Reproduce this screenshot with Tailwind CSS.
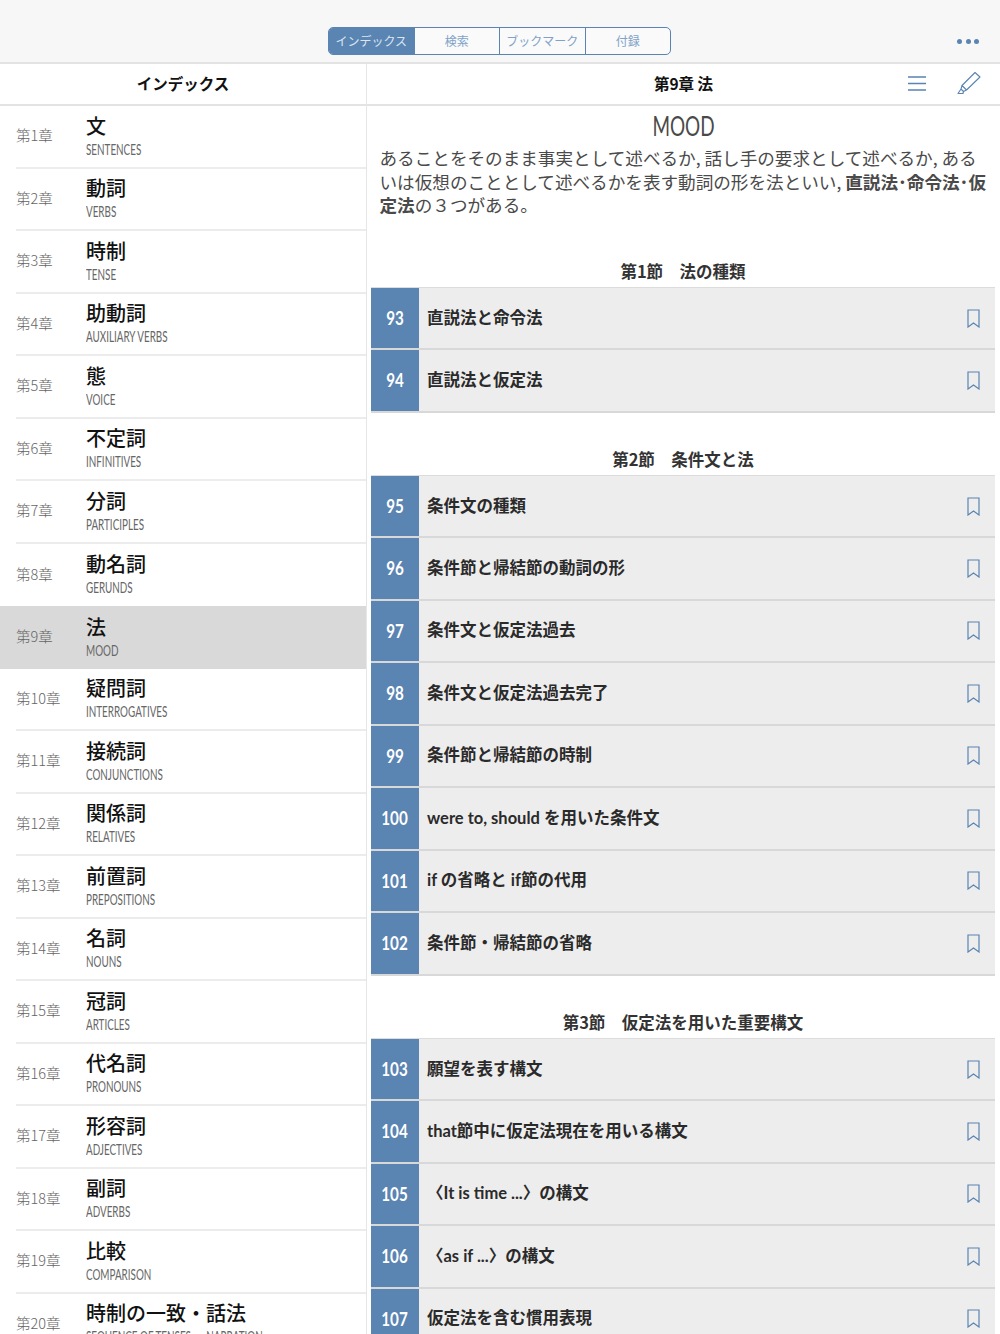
<!DOCTYPE html>
<html lang="ja">
<head>
<meta charset="utf-8">
<script src="https://cdn.jsdelivr.net/npm/@tailwindcss/browser@4"></script>
</head>
<body class="bg-white">
<div class="w-[1000px] h-[1334px] overflow-hidden flex flex-col font-['Noto_Sans','Noto_Sans_CJK_JP',sans-serif]">
  <!-- Top bar -->
  <header class="h-[64px] shrink-0 bg-[#f7f7f7] border-b-2 border-[#e3e3e3] relative flex items-start justify-center pt-[27px]">
    <div class="flex h-[28px] w-[343px] mr-[1px] rounded-[5px] border border-[#5a84b2] overflow-hidden text-[12px] text-[#7fa2c8] font-['Noto_Sans_CJK_JP',sans-serif] bg-white/40">
      <div class="flex-1 flex items-center justify-center bg-[#5a84b2] text-[#dbe6f1]">インデックス</div>
      <div class="flex-1 flex items-center justify-center border-l border-[#5a84b2]">検索</div>
      <div class="flex-1 flex items-center justify-center border-l border-[#5a84b2]">ブックマーク</div>
      <div class="flex-1 flex items-center justify-center border-l border-[#5a84b2]">付録</div>
    </div>
    <div class="absolute left-[957px] top-[39px] flex gap-[3.5px]">
      <span class="w-[5px] h-[5px] rounded-full bg-[#5a84b2]"></span>
      <span class="w-[5px] h-[5px] rounded-full bg-[#5a84b2]"></span>
      <span class="w-[5px] h-[5px] rounded-full bg-[#5a84b2]"></span>
    </div>
  </header>

  <div class="flex flex-1 min-h-0">
    <!-- Sidebar -->
    <aside class="w-[367px] shrink-0 border-r border-[#e6e6e6] flex flex-col">
      <div class="h-[42px] shrink-0 border-b-2 border-[#e3e3e3] flex items-center justify-center font-['Noto_Sans_CJK_JP',sans-serif] font-bold text-[15.5px] text-[#111]">インデックス</div>
      <ul class="font-['Noto_Sans_CJK_JP',sans-serif]">
        <li class="h-[62.5px] pl-[16px]"><div class="h-full flex items-center border-b-2 border-[#ececec]"><span class="w-[70px] -mt-[2px] text-[14.5px] font-light text-[#666]">第1章</span><div class="flex flex-col pt-[2px]"><span class="text-[20px] leading-[25px] font-medium text-[#111]">文</span><span class="origin-left scale-x-[0.68] whitespace-nowrap text-[14.5px] leading-[24px] text-[#666] font-['Lato',sans-serif]">SENTENCES</span></div></div></li>
        <li class="h-[62.5px] pl-[16px]"><div class="h-full flex items-center border-b-2 border-[#ececec]"><span class="w-[70px] -mt-[2px] text-[14.5px] font-light text-[#666]">第2章</span><div class="flex flex-col pt-[2px]"><span class="text-[20px] leading-[25px] font-medium text-[#111]">動詞</span><span class="origin-left scale-x-[0.68] whitespace-nowrap text-[14.5px] leading-[24px] text-[#666] font-['Lato',sans-serif]">VERBS</span></div></div></li>
        <li class="h-[62.5px] pl-[16px]"><div class="h-full flex items-center border-b-2 border-[#ececec]"><span class="w-[70px] -mt-[2px] text-[14.5px] font-light text-[#666]">第3章</span><div class="flex flex-col pt-[2px]"><span class="text-[20px] leading-[25px] font-medium text-[#111]">時制</span><span class="origin-left scale-x-[0.68] whitespace-nowrap text-[14.5px] leading-[24px] text-[#666] font-['Lato',sans-serif]">TENSE</span></div></div></li>
        <li class="h-[62.5px] pl-[16px]"><div class="h-full flex items-center border-b-2 border-[#ececec]"><span class="w-[70px] -mt-[2px] text-[14.5px] font-light text-[#666]">第4章</span><div class="flex flex-col pt-[2px]"><span class="text-[20px] leading-[25px] font-medium text-[#111]">助動詞</span><span class="origin-left scale-x-[0.68] whitespace-nowrap text-[14.5px] leading-[24px] text-[#666] font-['Lato',sans-serif]">AUXILIARY VERBS</span></div></div></li>
        <li class="h-[62.5px] pl-[16px]"><div class="h-full flex items-center border-b-2 border-[#ececec]"><span class="w-[70px] -mt-[2px] text-[14.5px] font-light text-[#666]">第5章</span><div class="flex flex-col pt-[2px]"><span class="text-[20px] leading-[25px] font-medium text-[#111]">態</span><span class="origin-left scale-x-[0.68] whitespace-nowrap text-[14.5px] leading-[24px] text-[#666] font-['Lato',sans-serif]">VOICE</span></div></div></li>
        <li class="h-[62.5px] pl-[16px]"><div class="h-full flex items-center border-b-2 border-[#ececec]"><span class="w-[70px] -mt-[2px] text-[14.5px] font-light text-[#666]">第6章</span><div class="flex flex-col pt-[2px]"><span class="text-[20px] leading-[25px] font-medium text-[#111]">不定詞</span><span class="origin-left scale-x-[0.68] whitespace-nowrap text-[14.5px] leading-[24px] text-[#666] font-['Lato',sans-serif]">INFINITIVES</span></div></div></li>
        <li class="h-[62.5px] pl-[16px]"><div class="h-full flex items-center border-b-2 border-[#ececec]"><span class="w-[70px] -mt-[2px] text-[14.5px] font-light text-[#666]">第7章</span><div class="flex flex-col pt-[2px]"><span class="text-[20px] leading-[25px] font-medium text-[#111]">分詞</span><span class="origin-left scale-x-[0.68] whitespace-nowrap text-[14.5px] leading-[24px] text-[#666] font-['Lato',sans-serif]">PARTICIPLES</span></div></div></li>
        <li class="h-[62.5px] pl-[16px]"><div class="h-full flex items-center"><span class="w-[70px] -mt-[2px] text-[14.5px] font-light text-[#666]">第8章</span><div class="flex flex-col pt-[2px]"><span class="text-[20px] leading-[25px] font-medium text-[#111]">動名詞</span><span class="origin-left scale-x-[0.68] whitespace-nowrap text-[14.5px] leading-[24px] text-[#666] font-['Lato',sans-serif]">GERUNDS</span></div></div></li>
        <li class="h-[62.5px] pl-[16px] bg-[#d9d9d9]"><div class="h-full flex items-center"><span class="w-[70px] -mt-[2px] text-[14.5px] font-light text-[#666]">第9章</span><div class="flex flex-col pt-[2px]"><span class="text-[20px] leading-[25px] font-medium text-[#111]">法</span><span class="origin-left scale-x-[0.68] whitespace-nowrap text-[14.5px] leading-[24px] text-[#666] font-['Lato',sans-serif]">MOOD</span></div></div></li>
        <li class="h-[62.5px] pl-[16px]"><div class="h-full flex items-center border-b-2 border-[#ececec]"><span class="w-[70px] -mt-[2px] text-[14.5px] font-light text-[#666]">第10章</span><div class="flex flex-col pt-[2px]"><span class="text-[20px] leading-[25px] font-medium text-[#111]">疑問詞</span><span class="origin-left scale-x-[0.68] whitespace-nowrap text-[14.5px] leading-[24px] text-[#666] font-['Lato',sans-serif]">INTERROGATIVES</span></div></div></li>
        <li class="h-[62.5px] pl-[16px]"><div class="h-full flex items-center border-b-2 border-[#ececec]"><span class="w-[70px] -mt-[2px] text-[14.5px] font-light text-[#666]">第11章</span><div class="flex flex-col pt-[2px]"><span class="text-[20px] leading-[25px] font-medium text-[#111]">接続詞</span><span class="origin-left scale-x-[0.68] whitespace-nowrap text-[14.5px] leading-[24px] text-[#666] font-['Lato',sans-serif]">CONJUNCTIONS</span></div></div></li>
        <li class="h-[62.5px] pl-[16px]"><div class="h-full flex items-center border-b-2 border-[#ececec]"><span class="w-[70px] -mt-[2px] text-[14.5px] font-light text-[#666]">第12章</span><div class="flex flex-col pt-[2px]"><span class="text-[20px] leading-[25px] font-medium text-[#111]">関係詞</span><span class="origin-left scale-x-[0.68] whitespace-nowrap text-[14.5px] leading-[24px] text-[#666] font-['Lato',sans-serif]">RELATIVES</span></div></div></li>
        <li class="h-[62.5px] pl-[16px]"><div class="h-full flex items-center border-b-2 border-[#ececec]"><span class="w-[70px] -mt-[2px] text-[14.5px] font-light text-[#666]">第13章</span><div class="flex flex-col pt-[2px]"><span class="text-[20px] leading-[25px] font-medium text-[#111]">前置詞</span><span class="origin-left scale-x-[0.68] whitespace-nowrap text-[14.5px] leading-[24px] text-[#666] font-['Lato',sans-serif]">PREPOSITIONS</span></div></div></li>
        <li class="h-[62.5px] pl-[16px]"><div class="h-full flex items-center border-b-2 border-[#ececec]"><span class="w-[70px] -mt-[2px] text-[14.5px] font-light text-[#666]">第14章</span><div class="flex flex-col pt-[2px]"><span class="text-[20px] leading-[25px] font-medium text-[#111]">名詞</span><span class="origin-left scale-x-[0.68] whitespace-nowrap text-[14.5px] leading-[24px] text-[#666] font-['Lato',sans-serif]">NOUNS</span></div></div></li>
        <li class="h-[62.5px] pl-[16px]"><div class="h-full flex items-center border-b-2 border-[#ececec]"><span class="w-[70px] -mt-[2px] text-[14.5px] font-light text-[#666]">第15章</span><div class="flex flex-col pt-[2px]"><span class="text-[20px] leading-[25px] font-medium text-[#111]">冠詞</span><span class="origin-left scale-x-[0.68] whitespace-nowrap text-[14.5px] leading-[24px] text-[#666] font-['Lato',sans-serif]">ARTICLES</span></div></div></li>
        <li class="h-[62.5px] pl-[16px]"><div class="h-full flex items-center border-b-2 border-[#ececec]"><span class="w-[70px] -mt-[2px] text-[14.5px] font-light text-[#666]">第16章</span><div class="flex flex-col pt-[2px]"><span class="text-[20px] leading-[25px] font-medium text-[#111]">代名詞</span><span class="origin-left scale-x-[0.68] whitespace-nowrap text-[14.5px] leading-[24px] text-[#666] font-['Lato',sans-serif]">PRONOUNS</span></div></div></li>
        <li class="h-[62.5px] pl-[16px]"><div class="h-full flex items-center border-b-2 border-[#ececec]"><span class="w-[70px] -mt-[2px] text-[14.5px] font-light text-[#666]">第17章</span><div class="flex flex-col pt-[2px]"><span class="text-[20px] leading-[25px] font-medium text-[#111]">形容詞</span><span class="origin-left scale-x-[0.68] whitespace-nowrap text-[14.5px] leading-[24px] text-[#666] font-['Lato',sans-serif]">ADJECTIVES</span></div></div></li>
        <li class="h-[62.5px] pl-[16px]"><div class="h-full flex items-center border-b-2 border-[#ececec]"><span class="w-[70px] -mt-[2px] text-[14.5px] font-light text-[#666]">第18章</span><div class="flex flex-col pt-[2px]"><span class="text-[20px] leading-[25px] font-medium text-[#111]">副詞</span><span class="origin-left scale-x-[0.68] whitespace-nowrap text-[14.5px] leading-[24px] text-[#666] font-['Lato',sans-serif]">ADVERBS</span></div></div></li>
        <li class="h-[62.5px] pl-[16px]"><div class="h-full flex items-center border-b-2 border-[#ececec]"><span class="w-[70px] -mt-[2px] text-[14.5px] font-light text-[#666]">第19章</span><div class="flex flex-col pt-[2px]"><span class="text-[20px] leading-[25px] font-medium text-[#111]">比較</span><span class="origin-left scale-x-[0.68] whitespace-nowrap text-[14.5px] leading-[24px] text-[#666] font-['Lato',sans-serif]">COMPARISON</span></div></div></li>
        <li class="h-[62.5px] pl-[16px]"><div class="h-full flex items-center border-b-2 border-[#ececec]"><span class="w-[70px] -mt-[2px] text-[14.5px] font-light text-[#666]">第20章</span><div class="flex flex-col pt-[2px]"><span class="text-[20px] leading-[25px] font-medium text-[#111]">時制の一致・話法</span><span class="origin-left scale-x-[0.68] whitespace-nowrap text-[14.5px] leading-[24px] text-[#666] font-['Lato',sans-serif]">SEQUENCE OF TENSES ・ NARRATION</span></div></div></li>
      </ul>
    </aside>

    <!-- Main -->
    <main class="flex-1 min-w-0 flex flex-col font-['Noto_Sans_CJK_JP',sans-serif]">
      <div class="h-[42px] shrink-0 border-b-2 border-[#e3e3e3] relative flex items-center justify-center font-bold text-[15.5px] text-[#111]">
        第9章 法
        <svg class="absolute left-[541px] top-[12px]" width="18" height="15" viewBox="0 0 18 15" fill="none" stroke="#5a84b2" stroke-width="1.3"><path d="M0 1h18M0 7.500h18M0 14h18"/></svg>
        <svg class="absolute left-[590px] top-[7px]" width="24" height="24" viewBox="0 0 24 24" fill="none" stroke="#5a84b2" stroke-width="1.1" stroke-linejoin="round"><path d="M18 1.500 23 6 9.500 19 5 14.500zM5 14.500 4 18l2.500 2.500 3-1.500M4 18 1 22.500h5l.5-2"/></svg>
      </div>

      <div class="shrink-0 scale-x-[0.7] text-center text-[27px] leading-[40px] text-[#4a4a4a] font-['Lato',sans-serif]">MOOD</div>
      <p class="shrink-0 pl-[12.5px] text-[17.6px] leading-[23.5px] text-[#4a4a4a] h-[78.5px] whitespace-nowrap">あることをそのまま事実として述べるか, 話し手の要求として述べるか, ある<br>いは仮想のこととして述べるかを表す動詞の形を法といい, <b class="font-bold">直説法･命令法･仮</b><br><b class="font-bold">定法</b>の３つがある。</p>

      <section class="shrink-0 ml-[4px] mr-[5px]">
        <h2 class="h-[62.5px] flex items-end justify-center pb-[5px] text-[16.5px] font-bold text-[#333] leading-[22px]">第1節　法の種類</h2>
        <div class="border-t border-[#dcdcdc]">
          <div class="h-[62px] flex items-stretch bg-[#ededed] border-b-2 border-[#d8d8d8]"><span class="w-[48px] shrink-0 flex items-center justify-center bg-[#5a84b2] text-white font-bold text-[19px] font-['Lato',sans-serif]"><span class="scale-x-[0.8] whitespace-nowrap">93</span></span><span class="flex-1 flex items-center pl-[8px] text-[16.5px] font-bold text-[#2a2a2a] font-['Lato','Noto_Sans_CJK_JP',sans-serif]">直説法と命令法</span><svg class="self-center mr-[15px]" width="13" height="19" viewBox="0 0 13 19" fill="none" stroke="#5a84b2" stroke-width="1.2"><path d="M1 1h11v17l-5.500-4L1 18z"/></svg></div>
          <div class="h-[62.5px] flex items-stretch bg-[#ededed] border-b-2 border-[#d8d8d8]"><span class="w-[48px] shrink-0 flex items-center justify-center bg-[#5a84b2] text-white font-bold text-[19px] font-['Lato',sans-serif]"><span class="scale-x-[0.8] whitespace-nowrap">94</span></span><span class="flex-1 flex items-center pl-[8px] text-[16.5px] font-bold text-[#2a2a2a] font-['Lato','Noto_Sans_CJK_JP',sans-serif]">直説法と仮定法</span><svg class="self-center mr-[15px]" width="13" height="19" viewBox="0 0 13 19" fill="none" stroke="#5a84b2" stroke-width="1.2"><path d="M1 1h11v17l-5.500-4L1 18z"/></svg></div>
        </div>
      </section>

      <section class="shrink-0 ml-[4px] mr-[5px]">
        <h2 class="h-[62.5px] flex items-end justify-center pb-[5px] text-[16.5px] font-bold text-[#333] leading-[22px]">第2節　条件文と法</h2>
        <div class="border-t border-[#dcdcdc]">
          <div class="h-[62px] flex items-stretch bg-[#ededed] border-b-2 border-[#d8d8d8]"><span class="w-[48px] shrink-0 flex items-center justify-center bg-[#5a84b2] text-white font-bold text-[19px] font-['Lato',sans-serif]"><span class="scale-x-[0.8] whitespace-nowrap">95</span></span><span class="flex-1 flex items-center pl-[8px] text-[16.5px] font-bold text-[#2a2a2a] font-['Lato','Noto_Sans_CJK_JP',sans-serif]">条件文の種類</span><svg class="self-center mr-[15px]" width="13" height="19" viewBox="0 0 13 19" fill="none" stroke="#5a84b2" stroke-width="1.2"><path d="M1 1h11v17l-5.500-4L1 18z"/></svg></div>
          <div class="h-[62.5px] flex items-stretch bg-[#ededed] border-b-2 border-[#d8d8d8]"><span class="w-[48px] shrink-0 flex items-center justify-center bg-[#5a84b2] text-white font-bold text-[19px] font-['Lato',sans-serif]"><span class="scale-x-[0.8] whitespace-nowrap">96</span></span><span class="flex-1 flex items-center pl-[8px] text-[16.5px] font-bold text-[#2a2a2a] font-['Lato','Noto_Sans_CJK_JP',sans-serif]">条件節と帰結節の動詞の形</span><svg class="self-center mr-[15px]" width="13" height="19" viewBox="0 0 13 19" fill="none" stroke="#5a84b2" stroke-width="1.2"><path d="M1 1h11v17l-5.500-4L1 18z"/></svg></div>
          <div class="h-[62.5px] flex items-stretch bg-[#ededed] border-b-2 border-[#d8d8d8]"><span class="w-[48px] shrink-0 flex items-center justify-center bg-[#5a84b2] text-white font-bold text-[19px] font-['Lato',sans-serif]"><span class="scale-x-[0.8] whitespace-nowrap">97</span></span><span class="flex-1 flex items-center pl-[8px] text-[16.5px] font-bold text-[#2a2a2a] font-['Lato','Noto_Sans_CJK_JP',sans-serif]">条件文と仮定法過去</span><svg class="self-center mr-[15px]" width="13" height="19" viewBox="0 0 13 19" fill="none" stroke="#5a84b2" stroke-width="1.2"><path d="M1 1h11v17l-5.500-4L1 18z"/></svg></div>
          <div class="h-[62.5px] flex items-stretch bg-[#ededed] border-b-2 border-[#d8d8d8]"><span class="w-[48px] shrink-0 flex items-center justify-center bg-[#5a84b2] text-white font-bold text-[19px] font-['Lato',sans-serif]"><span class="scale-x-[0.8] whitespace-nowrap">98</span></span><span class="flex-1 flex items-center pl-[8px] text-[16.5px] font-bold text-[#2a2a2a] font-['Lato','Noto_Sans_CJK_JP',sans-serif]">条件文と仮定法過去完了</span><svg class="self-center mr-[15px]" width="13" height="19" viewBox="0 0 13 19" fill="none" stroke="#5a84b2" stroke-width="1.2"><path d="M1 1h11v17l-5.500-4L1 18z"/></svg></div>
          <div class="h-[62.5px] flex items-stretch bg-[#ededed] border-b-2 border-[#d8d8d8]"><span class="w-[48px] shrink-0 flex items-center justify-center bg-[#5a84b2] text-white font-bold text-[19px] font-['Lato',sans-serif]"><span class="scale-x-[0.8] whitespace-nowrap">99</span></span><span class="flex-1 flex items-center pl-[8px] text-[16.5px] font-bold text-[#2a2a2a] font-['Lato','Noto_Sans_CJK_JP',sans-serif]">条件節と帰結節の時制</span><svg class="self-center mr-[15px]" width="13" height="19" viewBox="0 0 13 19" fill="none" stroke="#5a84b2" stroke-width="1.2"><path d="M1 1h11v17l-5.500-4L1 18z"/></svg></div>
          <div class="h-[62.5px] flex items-stretch bg-[#ededed] border-b-2 border-[#d8d8d8]"><span class="w-[48px] shrink-0 flex items-center justify-center bg-[#5a84b2] text-white font-bold text-[19px] font-['Lato',sans-serif]"><span class="scale-x-[0.8] whitespace-nowrap">100</span></span><span class="flex-1 flex items-center pl-[8px] text-[16.5px] font-bold text-[#2a2a2a] font-['Lato','Noto_Sans_CJK_JP',sans-serif]">were to, should を用いた条件文</span><svg class="self-center mr-[15px]" width="13" height="19" viewBox="0 0 13 19" fill="none" stroke="#5a84b2" stroke-width="1.2"><path d="M1 1h11v17l-5.500-4L1 18z"/></svg></div>
          <div class="h-[62.5px] flex items-stretch bg-[#ededed] border-b-2 border-[#d8d8d8]"><span class="w-[48px] shrink-0 flex items-center justify-center bg-[#5a84b2] text-white font-bold text-[19px] font-['Lato',sans-serif]"><span class="scale-x-[0.8] whitespace-nowrap">101</span></span><span class="flex-1 flex items-center pl-[8px] text-[16.5px] font-bold text-[#2a2a2a] font-['Lato','Noto_Sans_CJK_JP',sans-serif]">if の省略と if節の代用</span><svg class="self-center mr-[15px]" width="13" height="19" viewBox="0 0 13 19" fill="none" stroke="#5a84b2" stroke-width="1.2"><path d="M1 1h11v17l-5.500-4L1 18z"/></svg></div>
          <div class="h-[62.5px] flex items-stretch bg-[#ededed] border-b-2 border-[#d8d8d8]"><span class="w-[48px] shrink-0 flex items-center justify-center bg-[#5a84b2] text-white font-bold text-[19px] font-['Lato',sans-serif]"><span class="scale-x-[0.8] whitespace-nowrap">102</span></span><span class="flex-1 flex items-center pl-[8px] text-[16.5px] font-bold text-[#2a2a2a] font-['Lato','Noto_Sans_CJK_JP',sans-serif]">条件節・帰結節の省略</span><svg class="self-center mr-[15px]" width="13" height="19" viewBox="0 0 13 19" fill="none" stroke="#5a84b2" stroke-width="1.2"><path d="M1 1h11v17l-5.500-4L1 18z"/></svg></div>
        </div>
      </section>

      <section class="shrink-0 ml-[4px] mr-[5px]">
        <h2 class="h-[62.5px] flex items-end justify-center pb-[5px] text-[16.5px] font-bold text-[#333] leading-[22px]">第3節　仮定法を用いた重要構文</h2>
        <div class="border-t border-[#dcdcdc]">
          <div class="h-[62px] flex items-stretch bg-[#ededed] border-b-2 border-[#d8d8d8]"><span class="w-[48px] shrink-0 flex items-center justify-center bg-[#5a84b2] text-white font-bold text-[19px] font-['Lato',sans-serif]"><span class="scale-x-[0.8] whitespace-nowrap">103</span></span><span class="flex-1 flex items-center pl-[8px] text-[16.5px] font-bold text-[#2a2a2a] font-['Lato','Noto_Sans_CJK_JP',sans-serif]">願望を表す構文</span><svg class="self-center mr-[15px]" width="13" height="19" viewBox="0 0 13 19" fill="none" stroke="#5a84b2" stroke-width="1.2"><path d="M1 1h11v17l-5.500-4L1 18z"/></svg></div>
          <div class="h-[62.5px] flex items-stretch bg-[#ededed] border-b-2 border-[#d8d8d8]"><span class="w-[48px] shrink-0 flex items-center justify-center bg-[#5a84b2] text-white font-bold text-[19px] font-['Lato',sans-serif]"><span class="scale-x-[0.8] whitespace-nowrap">104</span></span><span class="flex-1 flex items-center pl-[8px] text-[16.5px] font-bold text-[#2a2a2a] font-['Lato','Noto_Sans_CJK_JP',sans-serif]">that節中に仮定法現在を用いる構文</span><svg class="self-center mr-[15px]" width="13" height="19" viewBox="0 0 13 19" fill="none" stroke="#5a84b2" stroke-width="1.2"><path d="M1 1h11v17l-5.500-4L1 18z"/></svg></div>
          <div class="h-[62.5px] flex items-stretch bg-[#ededed] border-b-2 border-[#d8d8d8]"><span class="w-[48px] shrink-0 flex items-center justify-center bg-[#5a84b2] text-white font-bold text-[19px] font-['Lato',sans-serif]"><span class="scale-x-[0.8] whitespace-nowrap">105</span></span><span class="flex-1 flex items-center pl-[8px] text-[16.5px] font-bold text-[#2a2a2a] font-['Lato','Noto_Sans_CJK_JP',sans-serif]">〈It is time ...〉の構文</span><svg class="self-center mr-[15px]" width="13" height="19" viewBox="0 0 13 19" fill="none" stroke="#5a84b2" stroke-width="1.2"><path d="M1 1h11v17l-5.500-4L1 18z"/></svg></div>
          <div class="h-[62.5px] flex items-stretch bg-[#ededed] border-b-2 border-[#d8d8d8]"><span class="w-[48px] shrink-0 flex items-center justify-center bg-[#5a84b2] text-white font-bold text-[19px] font-['Lato',sans-serif]"><span class="scale-x-[0.8] whitespace-nowrap">106</span></span><span class="flex-1 flex items-center pl-[8px] text-[16.5px] font-bold text-[#2a2a2a] font-['Lato','Noto_Sans_CJK_JP',sans-serif]">〈as if ...〉の構文</span><svg class="self-center mr-[15px]" width="13" height="19" viewBox="0 0 13 19" fill="none" stroke="#5a84b2" stroke-width="1.2"><path d="M1 1h11v17l-5.500-4L1 18z"/></svg></div>
          <div class="h-[62.5px] flex items-stretch bg-[#ededed] border-b-2 border-[#d8d8d8]"><span class="w-[48px] shrink-0 flex items-center justify-center bg-[#5a84b2] text-white font-bold text-[19px] font-['Lato',sans-serif]"><span class="scale-x-[0.8] whitespace-nowrap">107</span></span><span class="flex-1 flex items-center pl-[8px] text-[16.5px] font-bold text-[#2a2a2a] font-['Lato','Noto_Sans_CJK_JP',sans-serif]">仮定法を含む慣用表現</span><svg class="self-center mr-[15px]" width="13" height="19" viewBox="0 0 13 19" fill="none" stroke="#5a84b2" stroke-width="1.2"><path d="M1 1h11v17l-5.500-4L1 18z"/></svg></div>
        </div>
      </section>
    </main>
  </div>
</div>
</body>
</html>
